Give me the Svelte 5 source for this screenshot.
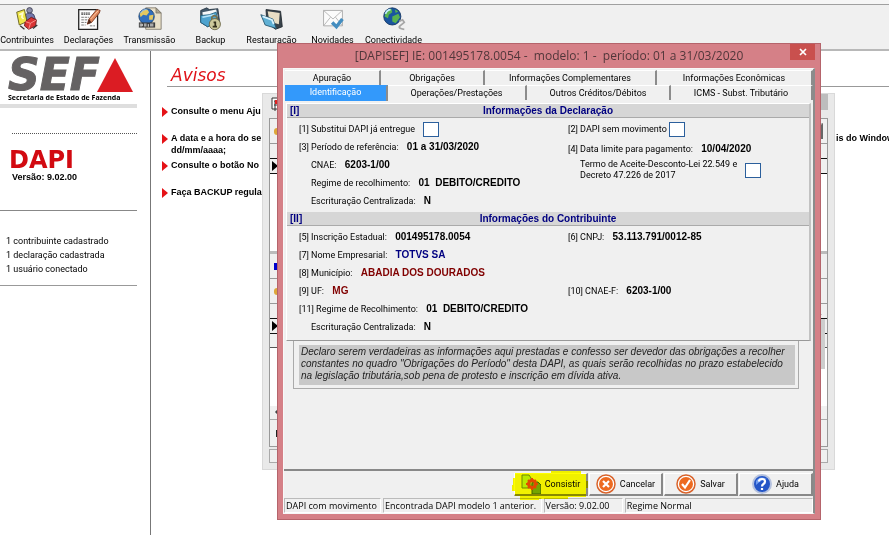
<script>
  const tools = [
    { id: 'people', label: 'Contribuintes' },
    { id: 'doc', label: 'Declarações' },
    { id: 'send', label: 'Transmissão' },
    { id: 'backup', label: 'Backup' },
    { id: 'restore', label: 'Restauração' },
    { id: 'news', label: 'Novidades' },
    { id: 'net', label: 'Conectividade' }
  ];
  const backTabs = ['Apuração', 'Obrigações', 'Informações Complementares', 'Informações Econômicas'];
  const frontTabs = ['Identificação', 'Operações/Prestações', 'Outros Créditos/Débitos', 'ICMS - Subst. Tributário'];
  const actions = [
    { id: 'check', label: 'Consistir' },
    { id: 'cancel', label: 'Cancelar' },
    { id: 'save', label: 'Salvar' },
    { id: 'help', label: 'Ajuda' }
  ];
  let replaces = $state(false);
  let noMovement = $state(false);
  let discount = $state(false);
</script>

<div class="app">
  <div class="menubar"></div>
  <nav class="toolbar">
    {#each tools as t}
      <button class="tool">
        <svg width="28" height="28" viewBox="0 0 28 28" aria-hidden="true">
          {#if t.id === 'people'}
            <circle cx="17" cy="4" r="3.3" fill="#8d8fa8" stroke="#3c3d52" />
            <path d="M12 9Q17 5 22 9L24 15L20 19H14Z" fill="#7478ad" stroke="#35385c" />
            <path d="M2 6L11 3L14 17L5 21Z" fill="#efe64b" stroke="#5c5714" />
            <path d="M5 9L9 7L8 12L10 14" fill="none" stroke="#fffbd0" stroke-width="2" />
            <path d="M12 17L19 12L25 15L24 22L16 26L11 22Z" fill="#d93434" stroke="#641414" />
            <path d="M12 17L18 19L25 15M18 19L16 26" fill="none" stroke="#ff9a96" />
            <path d="M6 22L11 26M21 25L26 21" stroke="#333" stroke-width="1.5" />
          {:else if t.id === 'doc'}
            <path d="M2 3H24V26H2Z" fill="#fdfdfd" stroke="#222" stroke-width="1.5" />
            <path d="M5 7H15M5 8.5H15" stroke="#222" stroke-dasharray="2 .7" />
            <path d="M5 12H14M5 15H12M5 18H11M5 21H10M15 22H21" stroke="#666" stroke-dasharray="3 1" />
            <path d="M12 20L14 14L23 3L27 4L26 7L17 18Z" fill="#e0875d" stroke="#76351d" />
            <path d="M12 20L14 14L17 18Z" fill="#4f2a1c" />
            <path d="M16 14L25 4" stroke="#ffd0ad" />
          {:else if t.id === 'send'}
            <path d="M9 1H21L27 7V26H9Z" fill="#e8dfc8" stroke="#7d776a" />
            <path d="M21 1V7H27Z" fill="#aaa392" stroke="#7d776a" />
            <circle cx="10" cy="11" r="9" fill="#316fbd" stroke="#18406e" />
            <path d="M6 4L11 3L13 6L10 10L6 9L3 12L2 8ZM13 10L18 9L17 15L13 15Z" fill="#e4c860" />
            <path d="M3 7Q6 2 10 3" stroke="#b5dcff" fill="none" />
            <path d="M1 18H20V24H1Z" fill="#3f3f3f" />
            <path d="M2 20H5V22H2M7 20H10M7 22H10M12 20V23M14 20H18M14 22H18" stroke="#fff" fill="none" />
          {:else if t.id === 'backup'}
            <path d="M2 4L9 1L12 3L22 2L24 17L10 23L2 18Z" fill="#44596a" stroke="#263440" />
            <path d="M4 6L20 3L22 12L5 14Z" fill="#f6f8f9" />
            <path d="M2 10L12 9L20 6L22 17L10 23L2 18Z" fill="#4ea3cf" stroke="#24617f" />
            <path d="M4 12L18 9" stroke="#b9e5f9" stroke-width="2" />
            <path d="M15 16V12Q18 8 21 12V16" fill="none" stroke="#77724f" stroke-width="2" />
            <circle cx="18.500" cy="20" r="6.500" fill="#cdc99b" stroke="#66613f" />
            <path d="M17 18H19V23M16 23H21" stroke="#332f1c" stroke-width="2" fill="none" />
          {:else if t.id === 'restore'}
            <path d="M7 3L24 5L26 23L18 26L8 18Z" fill="#39434b" stroke="#20272c" />
            <path d="M9 5L23 7L22 20L11 17Z" fill="#e9dec4" />
            <path d="M1 9L15 14L19 25L6 21Z" fill="#5fb0d4" stroke="#24536c" />
            <path d="M3 11L14 15L16 20" stroke="#d8f3ff" stroke-width="2" fill="none" />
          {:else if t.id === 'news'}
            <path d="M3 4H25V22H3Z" fill="#fbfbfb" stroke="#a5a5a5" />
            <path d="M3 4L14 14L25 4M3 22L11 12M25 22L17 12" fill="none" stroke="#b0b0b0" />
            <path d="M13 18L18 23L25 14" fill="none" stroke="#438dc0" stroke-width="4" />
          {:else}
            <circle cx="12" cy="11" r="10" fill="#1a559f" stroke="#123461" />
            <path d="M5 4L11 2L12 6L8 9L7 13L3 11ZM12 11L19 8L21 12L16 19L12 17ZM15 3L19 5L16 7Z" fill="#59b34f" />
            <path d="M4 8Q6 3 10 3" fill="none" stroke="#c1ecff" stroke-width="2" />
            <path d="M20 17L24 15L26 18L21 22Q18 25 26 26" fill="none" stroke="#a6a6a6" stroke-width="2" />
          {/if}
        </svg>
        <span>{t.label}</span>
      </button>
    {/each}
  </nav>

  <div class="body">
    <aside>
      <div class="logo">
        <span class="sef">SEF</span>
        <svg width="36" height="34" viewBox="0 0 36 34" aria-hidden="true"><path d="M18 0L36 34H0Z" fill="#db1c23" /></svg>
      </div>
      <div class="secretaria">Secretaria de Estado de Fazenda</div>
      <div class="dots"></div>
      <div class="product">DAPI</div>
      <div class="version">Versão: 9.02.00</div>
      <div class="counts">
        <div>1 contribuinte cadastrado</div>
        <div>1 declaração cadastrada</div>
        <div>1 usuário conectado</div>
      </div>
    </aside>
    <main>
      <h1>Avisos</h1>
      <ul>
        <li>Consulte o menu Aju</li>
        <li class="wide"><span>A data e a hora do se<br />dd/mm/aaaa;</span><span class="tail">is do Window</span></li>
        <li>Consulte o botão No</li>
        <li>Faça BACKUP regular</li>
      </ul>
    </main>
  </div>

  <section class="child">
    <div class="child-title">
      <svg width="14" height="16" viewBox="0 0 14 16" aria-hidden="true"><path d="M1 1H12V12H1ZM3 4H10M3 8H10M4 4V14" fill="#fff" stroke="#333" /><path d="M4 3H9V7H4ZM7 10L10 13V15H7Z" fill="#d22" /></svg>
      <i></i>
    </div>
    <div class="child-in">
      <div class="strip"><b class="hand"></b><b class="box"></b></div>
      <div class="head"></div>
      <div class="current"><i></i></div>
      <div class="blank"></div>
      <div class="strip blue"><b class="mark"></b></div>
      <div class="strip"><b class="hand"></b></div>
      <div class="head"></div>
      <div class="current"><i></i></div>
      <div class="head ruled"></div>
      <div class="blank short"></div>
      <div class="scroll"><svg width="7" height="8" viewBox="0 0 7 8" aria-hidden="true"><path d="M5 1L2 4L5 7" fill="none" stroke="#444" stroke-width="1.500" /></svg></div>
      <div class="foot"><b class="mark"></b></div>
      <div class="thumb">
        <svg width="8" height="6" viewBox="0 0 8 6" aria-hidden="true"><path d="M1 5L4 2L7 5" fill="none" stroke="#444" stroke-width="1.500" /></svg>
      </div>
    </div>
    <div class="child-status"></div>
  </section>

  <div class="dialog" role="dialog" aria-labelledby="dlg">
    <header>
      <h2 id="dlg">[DAPISEF] IE: 001495178.0054 -&nbsp; modelo: 1 -&nbsp; período: 01 a 31/03/2020</h2>
      <button class="close" aria-label="Fechar">
        <svg width="8" height="8" viewBox="0 0 8 8"><path d="M1 1L7 7M7 1L1 7" stroke="#fff" stroke-width="1.700" /></svg>
      </button>
    </header>
    <div class="client">
      <div class="tabs back">
        {#each backTabs as t}<button>{t}</button>{/each}
      </div>
      <div class="tabs front">
        {#each frontTabs as t, i}<button class:active={i === 0}>{t}</button>{/each}
      </div>

      <div class="panel">
        <h3><span>[I]</span>Informações da Declaração</h3>
        <div class="cols first">
          <div>
            <div class="row"><label for="c1">[1] Substitui DAPI já entregue</label><input id="c1" type="checkbox" bind:checked={replaces} /></div>
            <div class="row">[3] Período de referência: <b>01 a 31/03/2020</b></div>
            <div class="row sub">CNAE: <b>6203-1/00</b></div>
            <div class="row sub">Regime de recolhimento: <b>01&nbsp; DEBITO/CREDITO</b></div>
            <div class="row sub">Escrituração Centralizada: <b>N</b></div>
          </div>
          <div>
            <div class="row tight"><label for="c2">[2] DAPI sem movimento</label><input id="c2" type="checkbox" bind:checked={noMovement} /></div>
            <div class="row pay">[4] Data limite para pagamento: <b>10/04/2020</b></div>
            <div class="row sub term"><label for="c3">Termo de Aceite-Desconto-Lei 22.549 e<br />Decreto 47.226 de 2017</label><input id="c3" type="checkbox" bind:checked={discount} /></div>
          </div>
        </div>
        <h3><span>[II]</span>Informações do Contribuinte</h3>
        <div class="cols second">
          <div>
            <div class="row">[5] Inscrição Estadual: <b>001495178.0054</b></div>
            <div class="row">[7] Nome Empresarial: <b class="navy">TOTVS SA</b></div>
            <div class="row">[8] Município: <b class="maroon">ABADIA DOS DOURADOS</b></div>
            <div class="row">[9] UF: <b class="maroon">MG</b></div>
            <div class="row">[11] Regime de Recolhimento: <b>01&nbsp; DEBITO/CREDITO</b></div>
            <div class="row sub">Escrituração Centralizada: <b>N</b></div>
          </div>
          <div>
            <div class="row">[6] CNPJ: <b>53.113.791/0012-85</b></div>
            <div class="row gap">[10] CNAE-F: <b>6203-1/00</b></div>
          </div>
        </div>
      </div>

      <div class="oath">
        <p>Declaro serem verdadeiras as informações aqui prestadas e confesso ser devedor das obrigações a recolher<br />constantes no quadro "Obrigações do Período" desta DAPI, as quais serão recolhidas no prazo estabelecido<br />na legislação tributária,sob pena de protesto e inscrição em dívida ativa.</p>
      </div>

      <div class="actions">
        {#each actions as a}
          <button>
            <svg width="20" height="20" viewBox="0 0 20 20" aria-hidden="true">
              {#if a.id === 'check'}
                <path d="M1 1H8L10 4V14H1Z" fill="#b8e832" stroke="#6d8918" />
                <path d="M12 8H17L20 11V20H11V10Z" fill="#75a52a" stroke="#42641a" />
                <circle cx="11" cy="10" r="3.500" fill="none" stroke="#e24a0c" stroke-width="3" />
                <path d="M11 4V6M11 14V16M5 10H7M15 10H17M7 6L8 7M14 13L15 14M7 14L8 13M15 6L14 7" stroke="#e24a0c" stroke-width="2" />
              {:else if a.id === 'help'}
                <circle cx="10" cy="10" r="9" fill="#2456c7" stroke="#b4c1de" stroke-width="2" />
                <path d="M4 7Q8 1 15 5Q10 5 4 11Z" fill="#6f9cf0" />
                <path d="M7 7.500Q7 5 10 5T13 7.500Q13 9 11.500 10T10 12.500M10 14V16" fill="none" stroke="#fff" stroke-width="2.200" />
              {:else}
                <circle cx="10" cy="10" r="9" fill="#fff" stroke="#d9622a" stroke-width="1.500" />
                <circle cx="10" cy="10" r="7" fill="#ed6a20" />
                {#if a.id === 'cancel'}
                  <path d="M7 7L13 13M13 7L7 13" stroke="#fff" stroke-width="2.200" />
                {:else}
                  <path d="M6 10L9 13.500L14 6" fill="none" stroke="#fff" stroke-width="2.200" />
                {/if}
              {/if}
            </svg>
            {a.label}
          </button>
        {/each}
        <svg class="marker" width="80" height="32" viewBox="0 0 80 32" aria-hidden="true">
          <path d="M6 3H42V1H72V4H77V11H79V18H77V27H59V29H30V30H11V26H6V21H3V15H4V8H6Z" fill="#ffff00" />
        </svg>
      </div>
      <footer>
        <span>DAPI com movimento</span><span>Encontrada DAPI modelo 1 anterior.</span><span>Versão: 9.02.00</span><span>Regime Normal</span>
      </footer>
    </div>
  </div>
</div>

<style>
  :global(body) { margin: 0; background: #fff; }
  * { box-sizing: border-box; }
  .app {
    position: relative;
    min-height: 100vh;
    display: flex;
    flex-direction: column;
    overflow: hidden;
    font: 9px/12px Roboto, "Liberation Sans", sans-serif;
    color: #000;
  }
  button { font: inherit; color: inherit; padding: 0; margin: 0; border: 0; background: none; }
  h1, h2, h3, p, ul { margin: 0; padding: 0; }
  .menubar { height: 5px; background: #f6f6f6; border-bottom: 1px solid #a0a0a0; }
  .toolbar { display: flex; height: 46px; background: #f0f0f0; border-bottom: 2px solid #b8b8b8; }
  .tool {
    width: 61px;
    flex: none;
    display: flex;
    flex-direction: column;
    align-items: center;
    padding-top: 2px;
  }
  .tool:first-child { width: 58px; padding-right: 4px; }
  .tool span { line-height: 18px; }

  .body { flex: 1; display: flex; }
  aside { width: 151px; flex: none; border-right: 1px solid #777; padding: 6px 13px 0 0; }
  .logo { display: flex; align-items: center; padding-left: 8px; height: 35px; }
  .sef { font: italic bold 44px/35px "DejaVu Sans", sans-serif; color: #656263; -webkit-text-stroke: 1px #656263; }
  .logo svg { margin-left: -3px; position: relative; flex: none; }
  .secretaria { font: bold 7px/12px "Open Sans", sans-serif; padding-left: 8px; border-bottom: 4px solid #dedede; white-space: nowrap; }
  .dots { margin: 25px 0 0 12px; border-top: 1px dotted #555; }
  .product { margin: 13px 0 0 9px; font: bold 24px/26px "DejaVu Sans", sans-serif; color: #d20a11; }
  .version { margin: -2px 0 0 12px; font: bold 9px/12px "Liberation Sans", sans-serif; }
  .counts { margin-top: 27px; padding: 23px 0 9px 6px; line-height: 14px; border-top: 1px solid #888; border-bottom: 1px solid #999; }

  main { flex: 1; padding: 13px 0 0 11px; font: bold 9px/12px "Liberation Sans", sans-serif; }
  h1 { margin-left: 5px; padding-left: 4px; font: italic 17px/22px "DejaVu Sans", sans-serif; color: #e01218; border-bottom: 1px solid #999; }
  ul { list-style: none; margin-top: 18px; }
  li { position: relative; padding-left: 9px; margin-bottom: 15px; }
  li.wide { display: flex; justify-content: space-between; margin-bottom: 3px; }
  .tail { width: 53px; white-space: nowrap; }
  li::before {
    content: "";
    position: absolute;
    left: 0;
    top: 2px;
    border-left: 6px solid #e51217;
    border-top: 5px solid transparent;
    border-bottom: 5px solid transparent;
  }

  .child {
    position: absolute;
    left: 262px;
    right: 54px;
    top: 93px;
    padding: 0 6px 6px;
    background: #e9e9e9;
    border: 1px solid #d9d9d9;
  }
  .child-title { display: flex; justify-content: space-between; height: 24px; padding: 3px 0 0 2px; }
  .child-title i { width: 100px; height: 16px; margin-top: -3px; background: #bdbdbd; }
  .child-in { position: relative; background: #fff; border: 1px solid #999; }
  .strip { display: flex; justify-content: space-between; align-items: center; height: 25px; padding-left: 4px; background: #f0f0f0; border-bottom: 1px solid #999; }
  .mark { width: 6px; height: 7px; background: #222; }
  .blue .mark { background: #00c; }
  .hand { width: 8px; height: 7px; background: #dda63a; border-radius: 3px; }
  .box { width: 30px; height: 16px; margin-right: 4px; border: 2px outset #bbb; }
  .head { height: 14px; background: #f0f0f0; }
  .ruled { border-bottom: 1px solid #555; }
  .current { display: flex; align-items: center; height: 16px; padding-left: 2px; background: #f0f0f0; border-top: 1px solid #111; border-bottom: 1px solid #111; }
  .current i { border-left: 6px solid #000; border-top: 5px solid transparent; border-bottom: 5px solid transparent; }
  .blank { height: 80px; border-bottom: 3px solid #bbb; }
  .short { height: 58px; border: 0; }
  .scroll { height: 14px; padding: 2px 0 0 4px; line-height: 8px; background: #f0f0f0; border-bottom: 1px solid #aaa; }
  .foot { display: flex; align-items: center; height: 26px; padding-left: 6px; background: #f0f0f0; }
  .thumb { position: absolute; right: 2px; top: 200px; width: 16px; height: 50px; background: #cdcdcd; }
  .thumb svg { position: absolute; right: 3px; top: -9px; }
  .child-status { height: 14px; margin-top: 2px; border: 1px solid #aaa; background: #f0f0f0; }

  .dialog {
    position: absolute;
    left: 277px;
    right: 68px;
    top: 43px;
    padding: 0 5px 5px;
    background: #d58087;
    border: 1px solid #b5646b;
  }
  header { position: relative; height: 24px; }
  h2 { font: 12px/24px "Open Sans", "Noto Sans", sans-serif; text-align: center; color: #51363a; }
  .close { position: absolute; right: 0; top: 0; width: 25px; height: 16px; background: #c9504e; line-height: 8px; }
  .client { background: #f0f0f0; border: 1px solid #f8f8f8; border-right: 2px solid #8b8b8b; padding-top: 1px; }
  .tabs { display: grid; padding: 0 0 0 1px; }
  .back { grid-template-columns: 96fr 104fr 172fr 156fr; }
  .front { grid-template-columns: 103fr 139fr 144fr 142fr; }
  .tabs button { height: 15px; border-right: 2px solid #8c8c8c; border-top: 1px solid #fff; line-height: 14px; white-space: nowrap; }
  .tabs button.active { height: 16px; background: #3399fb; color: #fff; border-top-color: #3399fb; line-height: 12px; padding-bottom: 3px; }
  .panel { margin: 2px 2px 0; border-left: 1px solid #fff; border-right: 2px solid #c2c2c2; border-bottom: 1px solid #999; border-top: 1px solid #fff; }
  h3 { position: relative; height: 14px; background: #d6d6d6; border-bottom: 1px solid #aaa; font: bold 10px/13px "Liberation Sans", sans-serif; text-align: center; color: #000080; }
  h3 span { position: absolute; left: 3px; }
  .cols { display: grid; grid-template-columns: 269px 1fr; padding: 2px 0 0 12px; }
  .first { height: 94px; }
  .second { height: 114px; }
  .row { display: flex; align-items: center; height: 18px; white-space: pre; }
  .row b { margin-left: 6px; font: bold 10px/12px "Liberation Sans", sans-serif; color: #000; }
  .row b.navy { color: #000080; }
  .row b.maroon { color: #800000; }
  .sub { padding-left: 12px; }
  .pay { height: 22px; }
  .term { height: 20px; line-height: 11px; }
  .gap { margin-top: 36px; }
  input { appearance: none; width: 16px; height: 15px; margin: 0 0 0 8px; background: #fff; border: 1px solid #2b5f9c; }
  .tight input { margin-left: 2px; }
  .oath { margin: 0 14px 0 9px; padding: 4px 3px 3px 5px; border: 1px solid #aaa; border-top: 0; }
  .oath p { padding: 1px 2px 3px; background: #c8c8c8; font: italic 10px/12px "Liberation Sans", sans-serif; white-space: nowrap; color: #222; }

  .actions { position: relative; display: flex; justify-content: flex-end; gap: 1px; margin-top: 80px; padding: 2px 0 2px; border-top: 2px solid #888; }
  .actions button { display: flex; align-items: center; justify-content: center; gap: 4px; width: 74px; height: 23px; border: 1px solid #fff; border-right: 2px solid #888; border-bottom: 2px solid #888; }
  .marker { position: absolute; right: 224px; top: -1px; mix-blend-mode: multiply; pointer-events: none; }
  footer { display: grid; grid-template-columns: 98fr 160fr 80fr 190fr; gap: 2px; font: 9px/13px "Open Sans", "Noto Sans", sans-serif; }
  footer span { height: 15px; padding-left: 1px; white-space: nowrap; border: 1px solid #bbb; border-right-color: #fff; border-bottom-color: #fff; }
</style>
